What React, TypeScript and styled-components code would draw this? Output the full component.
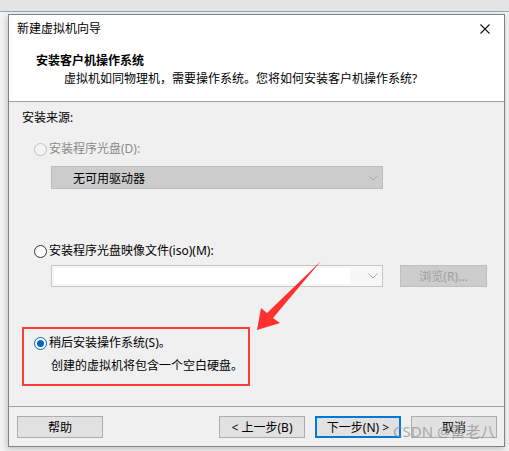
import styled, { createGlobalStyle } from 'styled-components';

const GlobalStyle = createGlobalStyle`
  html, body {
    margin: 0;
    padding: 0;
    background: #f3f3f3;
  }
  body {
    font-family: "Noto Sans", "Noto Sans CJK SC", sans-serif;
    font-size: 12px;
    color: #000;
  }
`;

const Page = styled.div`
  position: relative;
  width: 509px;
  height: 451px;
  overflow: hidden;
`;

const TopStrip = styled.div`
  height: 11px;
  background: #e4e4e4;
  border-bottom: 1px solid #8ea4ba;
`;

const Window = styled.div`
  box-sizing: border-box;
  margin: 2px 0 0 8px;
  width: 497px;
  height: 433px;
  border: 1px solid #838383;
  background: #f0f0f0;
  display: flex;
  flex-direction: column;
  box-shadow: -1px 2px 6px rgba(0, 0, 0, 0.22);
`;

const Header = styled.div`
  box-sizing: border-box;
  height: 87px;
  background: #fff;
  border-bottom: 1px solid #a0a0a0;
  display: flex;
  flex-direction: column;
`;

const TitleRow = styled.div`
  height: 28px;
  display: flex;
  align-items: center;
  justify-content: space-between;
  padding: 0 14px 0 8px;
  line-height: 16px;
`;

const CloseBox = styled.span`
  display: flex;
  width: 10px;
  height: 10px;
`;

const Heading = styled.div`
  margin: 10px 0 0 27px;
  height: 16px;
  line-height: 16px;
  font-weight: 700;
`;

const Subtitle = styled.div`
  margin: 2px 0 0 55px;
  height: 16px;
  line-height: 16px;
`;

const Body = styled.div`
  flex: 1;
  display: flex;
  flex-direction: column;
  padding: 8px 0 0 13px;
`;

const Line = styled.div<{ $top?: number; $indent?: number; $muted?: boolean }>`
  display: flex;
  align-items: center;
  height: 16px;
  line-height: 16px;
  margin-top: ${({ $top }) => $top ?? 0}px;
  margin-left: ${({ $indent }) => $indent ?? 0}px;
  color: ${({ $muted }) => ($muted ? '#8a8a8a' : '#000')};
  white-space: nowrap;
`;

const Radio = styled.span<{ $checked?: boolean; $disabled?: boolean }>`
  box-sizing: border-box;
  width: 13px;
  height: 13px;
  border-radius: 50%;
  margin-right: 2px;
  flex-shrink: 0;
  display: flex;
  align-items: center;
  justify-content: center;
  background: ${({ $disabled }) => ($disabled ? '#f4f4f4' : '#fff')};
  border: 1px solid
    ${({ $checked, $disabled }) => ($checked ? '#0067c0' : $disabled ? '#c2c2c2' : '#333')};

  &::after {
    content: '';
    display: ${({ $checked }) => ($checked ? 'block' : 'none')};
    width: 7px;
    height: 7px;
    border-radius: 50%;
    background: #0067c0;
  }
`;

const ComboRow = styled.div<{ $top: number }>`
  display: flex;
  align-items: center;
  margin: ${({ $top }) => $top}px 0 0 29px;
  gap: 17px;
`;

const Combo = styled.div<{ $disabled?: boolean; $h: number }>`
  box-sizing: border-box;
  width: 332px;
  height: ${({ $h }) => $h}px;
  display: flex;
  align-items: center;
  justify-content: space-between;
  padding: 0 2px 0 21px;
  border: 1px solid ${({ $disabled }) => ($disabled ? '#bdbdbd' : '#c6c6c6')};
  background: ${({ $disabled }) => ($disabled ? '#cccccc' : '#f7f7f7')};
`;

const ComboField = styled.div`
  flex: 1;
  align-self: stretch;
  margin: 2px 18px 2px -19px;
  background: #fff;
`;

const Chevron = styled.svg`
  width: 10px;
  height: 6px;
  margin-right: 2px;
  flex-shrink: 0;
`;

const BrowseButton = styled.div`
  box-sizing: border-box;
  width: 87px;
  height: 22px;
  display: flex;
  align-items: center;
  justify-content: center;
  background: #cccccc;
  border: 1px solid #bfbfbf;
  color: #a0a0a0;
`;

const Highlight = styled.div`
  box-sizing: border-box;
  margin-top: 40px;
  width: 228px;
  height: 59px;
  border: 2px solid #ff3b3b;
  padding: 6px 0 0 10px;
  display: flex;
  flex-direction: column;
`;

const Footer = styled.div`
  box-sizing: border-box;
  height: 40px;
  border-top: 1px solid #a0a0a0;
  display: flex;
  align-items: flex-start;
  padding: 9px 7px 0 8px;
  gap: 10px;
`;

const Button = styled.div<{ $primary?: boolean }>`
  box-sizing: border-box;
  width: 86px;
  height: 22px;
  display: flex;
  align-items: center;
  justify-content: center;
  background: #e1e1e1;
  border: ${({ $primary }) => ($primary ? '2px solid #0078d7' : '1px solid #adadad')};
  white-space: nowrap;
`;

const Spacer = styled.div`
  flex: 1;
`;

const Overlay = styled.svg`
  position: absolute;
  left: 0;
  top: 0;
  width: 509px;
  height: 451px;
  pointer-events: none;
`;

const Watermark = styled.div`
  position: absolute;
  left: 393px;
  top: 421px;
  font-size: 15px;
  line-height: 20px;
  color: rgba(140, 140, 140, 0.7);
  white-space: nowrap;
  pointer-events: none;
`;

function ChevronIcon({ color }: { color: string }) {
  return (
    <Chevron viewBox="0 0 10 6">
      <path d="M0.5 0.5 L5 5 L9.5 0.5" fill="none" stroke={color} strokeWidth="1" />
    </Chevron>
  );
}

export default function App() {
  return (
    <Page>
      <GlobalStyle />
      <TopStrip />
      <Window>
        <Header>
          <TitleRow>
            <span>新建虚拟机向导</span>
            <CloseBox>
              <svg width="10" height="10" viewBox="0 0 10 10">
                <path d="M0.5 0.5 L9.5 9.5 M9.5 0.5 L0.5 9.5" stroke="#111" strokeWidth="1.1" />
              </svg>
            </CloseBox>
          </TitleRow>
          <Heading>安装客户机操作系统</Heading>
          <Subtitle>虚拟机如同物理机，需要操作系统。您将如何安装客户机操作系统?</Subtitle>
        </Header>

        <Body>
          <Line>安装来源:</Line>

          <Line $top={15} $indent={12} $muted>
            <Radio $disabled />
            安装程序光盘(D):
          </Line>
          <ComboRow $top={9}>
            <Combo $disabled $h={23}>
              <span>无可用驱动器</span>
              <ChevronIcon color="#ababab" />
            </Combo>
          </ComboRow>

          <Line $top={54} $indent={12}>
            <Radio />
            安装程序光盘映像文件(iso)(M):
          </Line>
          <ComboRow $top={6}>
            <Combo $h={22}>
              <ComboField />
              <ChevronIcon color="#a8a8a8" />
            </Combo>
            <BrowseButton>浏览(R)...</BrowseButton>
          </ComboRow>

          <Highlight>
            <Line>
              <Radio $checked />
              稍后安装操作系统(S)。
            </Line>
            <Line $top={7} $indent={17}>
              创建的虚拟机将包含一个空白硬盘。
            </Line>
          </Highlight>
        </Body>

        <Footer>
          <Button>帮助</Button>
          <Spacer />
          <Button>&lt; 上一步(B)</Button>
          <Button $primary>下一步(N) &gt;</Button>
          <Button>取消</Button>
        </Footer>
      </Window>

      <Overlay viewBox="0 0 509 451">
        <polygon
          points="257,330 261,308 267,313 321,261 273,318 280,323"
          fill="#ff3030"
        />
      </Overlay>
      <Watermark>CSDN @雷老八</Watermark>
    </Page>
  );
}
